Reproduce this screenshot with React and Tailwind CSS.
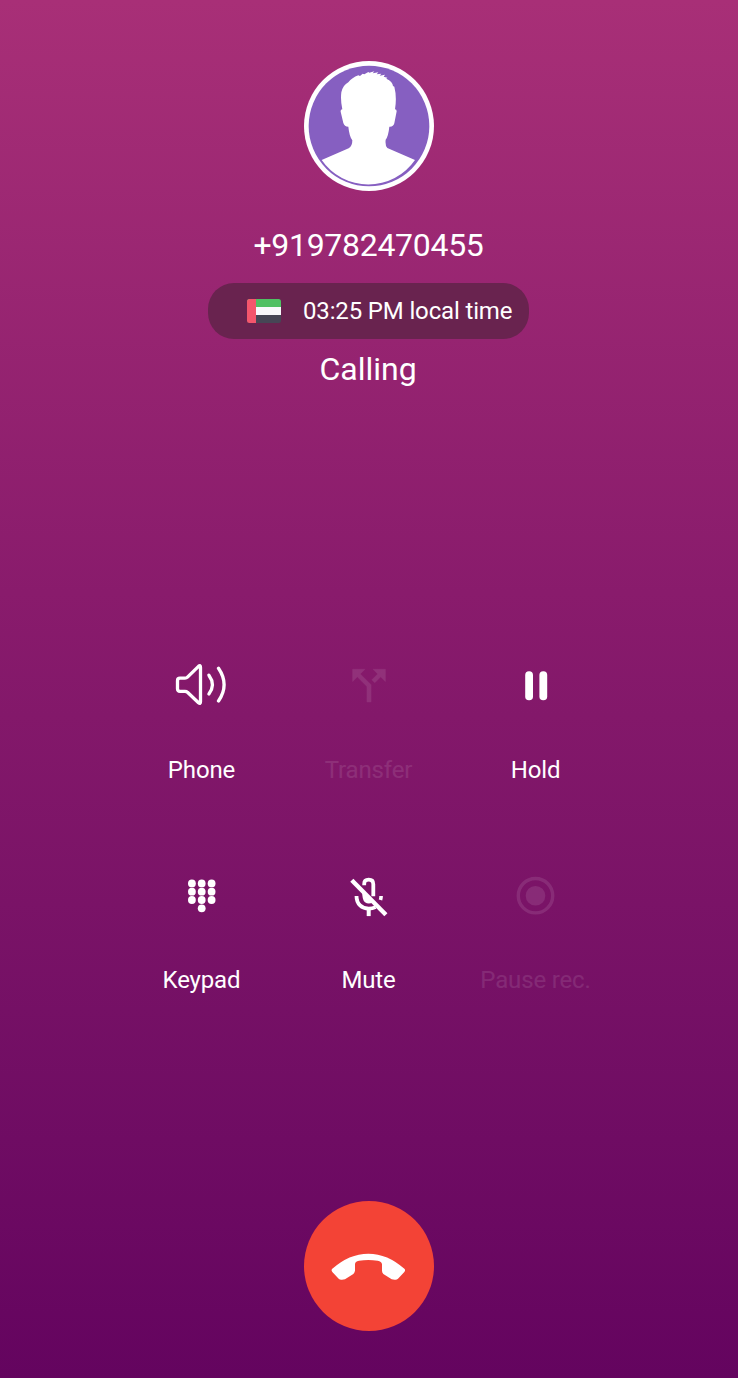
import React from 'react'

const iconClass = 'w-14 h-14'

function Avatar() {
  return (
    <svg viewBox="30 32 390 390" className="w-[130px] h-[130px]">
      <circle cx="225" cy="227" r="195" fill="#fff" />
      <circle cx="225" cy="227" r="181" fill="#865fc1" />
      <path
        fill="#fff"
        d="M83 329 L164 294 Q175 288 175 270 Q166 258 163 229 Q151 229 148 218 L140 184 Q139 177 145 177 Q139 150 142 126 Q147 104 163 96 Q174 82 193 75 L198 77 L206 70 L211 72 L223 65 L226 67 L241 63 L236 69 L253 66 L248 72 L262 70 L257 76 L273 73 L269 79 L280 82 L277 85 Q296 93 297 107 L301 109 Q309 140 303 177 Q308 177 308 183 L301 219 Q298 230 286 229 Q283 258 275 268 Q273 287 280 293 L363 329 A170 170 0 0 1 83 329Z"
      />
    </svg>
  )
}

function UaeFlag() {
  return (
    <svg viewBox="0 0 34 24" className="w-[34px] h-6">
      <clipPath id="flag">
        <rect width="34" height="24" rx="2.5" />
      </clipPath>
      <g clipPath="url(#flag)">
        <rect width="34" height="8" fill="#4fc063" />
        <rect y="8" width="34" height="8" fill="#f8f8fb" />
        <rect y="16" width="34" height="8" fill="#464655" />
        <rect width="9" height="24" fill="#f4566c" />
      </g>
    </svg>
  )
}

function SpeakerIcon() {
  return (
    <svg viewBox="0.5 0 56 56" className={iconClass} fill="none" stroke="currentColor" strokeWidth="3.3" strokeLinecap="round" strokeLinejoin="round">
      <path d="M6.5 21.2 H11.5 Q13 21.2 14 20.2 L25 9.3 Q27 7.6 27 10.5 V44.5 Q27 47.4 25 45.7 L14 35.3 Q13 34.3 11.5 34.3 H6.5 Q4 34.3 4 31.8 V23.7 Q4 21.2 6.5 21.2Z" />
      <path d="M35.4 18.2 Q42.4 27.8 35.4 37" />
      <path d="M45 11.3 Q56.2 27.8 45 44" />
    </svg>
  )
}

function TransferIcon() {
  return (
    <svg viewBox="-1.7 -2 27.4 27.4" className={iconClass} fill="currentColor" stroke="currentColor" strokeWidth="0.25">
      <path d="M14 4l2.29 2.29-2.88 2.88 1.42 1.42 2.88-2.88L20 10V4zm-4 0H4v6l2.29-2.29 4.71 4.7V20h2v-8.41l-5.29-5.3z" />
    </svg>
  )
}

function HoldIcon() {
  return (
    <svg viewBox="0.1 -0.3 56 56" className={iconClass} fill="currentColor">
      <rect x="17.3" y="14" width="7.8" height="29" rx="3.8" />
      <rect x="31.5" y="14" width="7.8" height="29" rx="3.8" />
    </svg>
  )
}

function KeypadIcon() {
  const dots = [
    [18.4, 15.9], [28.2, 15.9], [38.1, 15.9],
    [18.4, 24.2], [28.2, 24.2], [38.1, 24.2],
    [18.4, 32.5], [28.2, 32.5], [38.1, 32.5],
    [28.2, 40.8],
  ]
  return (
    <svg viewBox="0.5 -0.5 56 56" className={iconClass} fill="currentColor">
      {dots.map(([x, y]) => <circle key={`${x}-${y}`} cx={x} cy={y} r="3.9" />)}
    </svg>
  )
}

function MuteIcon() {
  return (
    <svg viewBox="0.5 -0.7 56 56" className={iconClass} fill="none" stroke="currentColor" strokeWidth="3.8">
      <path d="M11.3 12.5 L45.4 47" strokeWidth="4.4" />
      <path d="M23.7 17.6 V16.3 Q23.7 12 28.2 12 Q32.8 12 32.8 16.5 V28.5" />
      <path d="M21.8 23.5 L32.5 34.6 Q28 37 24.5 34.5 Q21.4 32 21.8 23.5Z" fill="currentColor" stroke="none" />
      <path d="M16 28.3 C16 36.5 21.5 41 28.2 41 Q32 41 35 39.4" />
      <path d="M40.6 28.3 Q40.6 30.4 40 32.4" strokeWidth="3.6" />
      <path d="M28.2 41 V48.4" strokeWidth="4" />
    </svg>
  )
}

function RecordIcon() {
  return (
    <svg viewBox="0.3 -0.7 56 56" className={iconClass}>
      <circle cx="27.8" cy="28" r="17.2" fill="none" stroke="currentColor" strokeWidth="3.4" />
      <circle cx="27.8" cy="28" r="9.8" fill="currentColor" />
    </svg>
  )
}

function HangUpIcon() {
  return (
    <svg viewBox="30 32 390 390" className="w-[130px] h-[130px]" fill="#fff">
      <path d="M114 236 Q165 190 223 190 Q281 190 332 236 Q335 241 331 245 L312 265 Q308 269 302 268 L293 267 L268 251 Q264 247 264 241 L264 222 Q263 213 251 211 Q223 207 195 211 Q183 213 183 222 L183 241 Q182 247 178 251 L153 267 L144 268 Q138 269 134 265 L115 245 Q111 241 114 236Z" />
    </svg>
  )
}

const actions = [
  { label: 'Phone', Icon: SpeakerIcon },
  { label: 'Transfer', Icon: TransferIcon, disabled: true },
  { label: 'Hold', Icon: HoldIcon },
  { label: 'Keypad', Icon: KeypadIcon },
  { label: 'Mute', Icon: MuteIcon },
  { label: 'Pause rec.', Icon: RecordIcon, disabled: true },
]

function ActionButton({ label, Icon, disabled }) {
  return (
    <button
      type="button"
      disabled={disabled}
      className={`flex flex-col items-center h-[210px] text-white ${disabled ? 'opacity-10' : ''}`}
    >
      <Icon />
      <span className="mt-[41px] text-2xl leading-8 tracking-[-0.15px] whitespace-nowrap">{label}</span>
    </button>
  )
}

export default function App() {
  return (
    <div className="flex flex-col items-center w-full h-screen pt-[61px] overflow-hidden bg-linear-to-b from-[#a82f77] via-[#891b6c] via-43% to-[#64045f] font-[Roboto,sans-serif] text-white">
      <Avatar />
      <h1 className="mt-[34px] mr-px text-[32px] leading-10 tracking-[-0.3px]">+919782470455</h1>
      <div className="mt-[18px] mr-px flex items-center w-[321px] h-14 pl-[39px] rounded-[26px] bg-[#69234f]">
        <UaeFlag />
        <span className="ml-[22px] text-2xl tracking-[-0.15px] whitespace-nowrap">03:25 PM local time</span>
      </div>
      <p className="mt-2.5 mr-0.5 text-[32px] leading-10">Calling</p>

      <div className="mt-[268px] mr-px grid grid-cols-3 w-[501px]">
        {actions.map(action => <ActionButton key={action.label} {...action} />)}
      </div>

      <button type="button" aria-label="End call" className="mt-[124px] shrink-0 rounded-full bg-[#f34336]">
        <HangUpIcon />
      </button>
    </div>
  )
}
